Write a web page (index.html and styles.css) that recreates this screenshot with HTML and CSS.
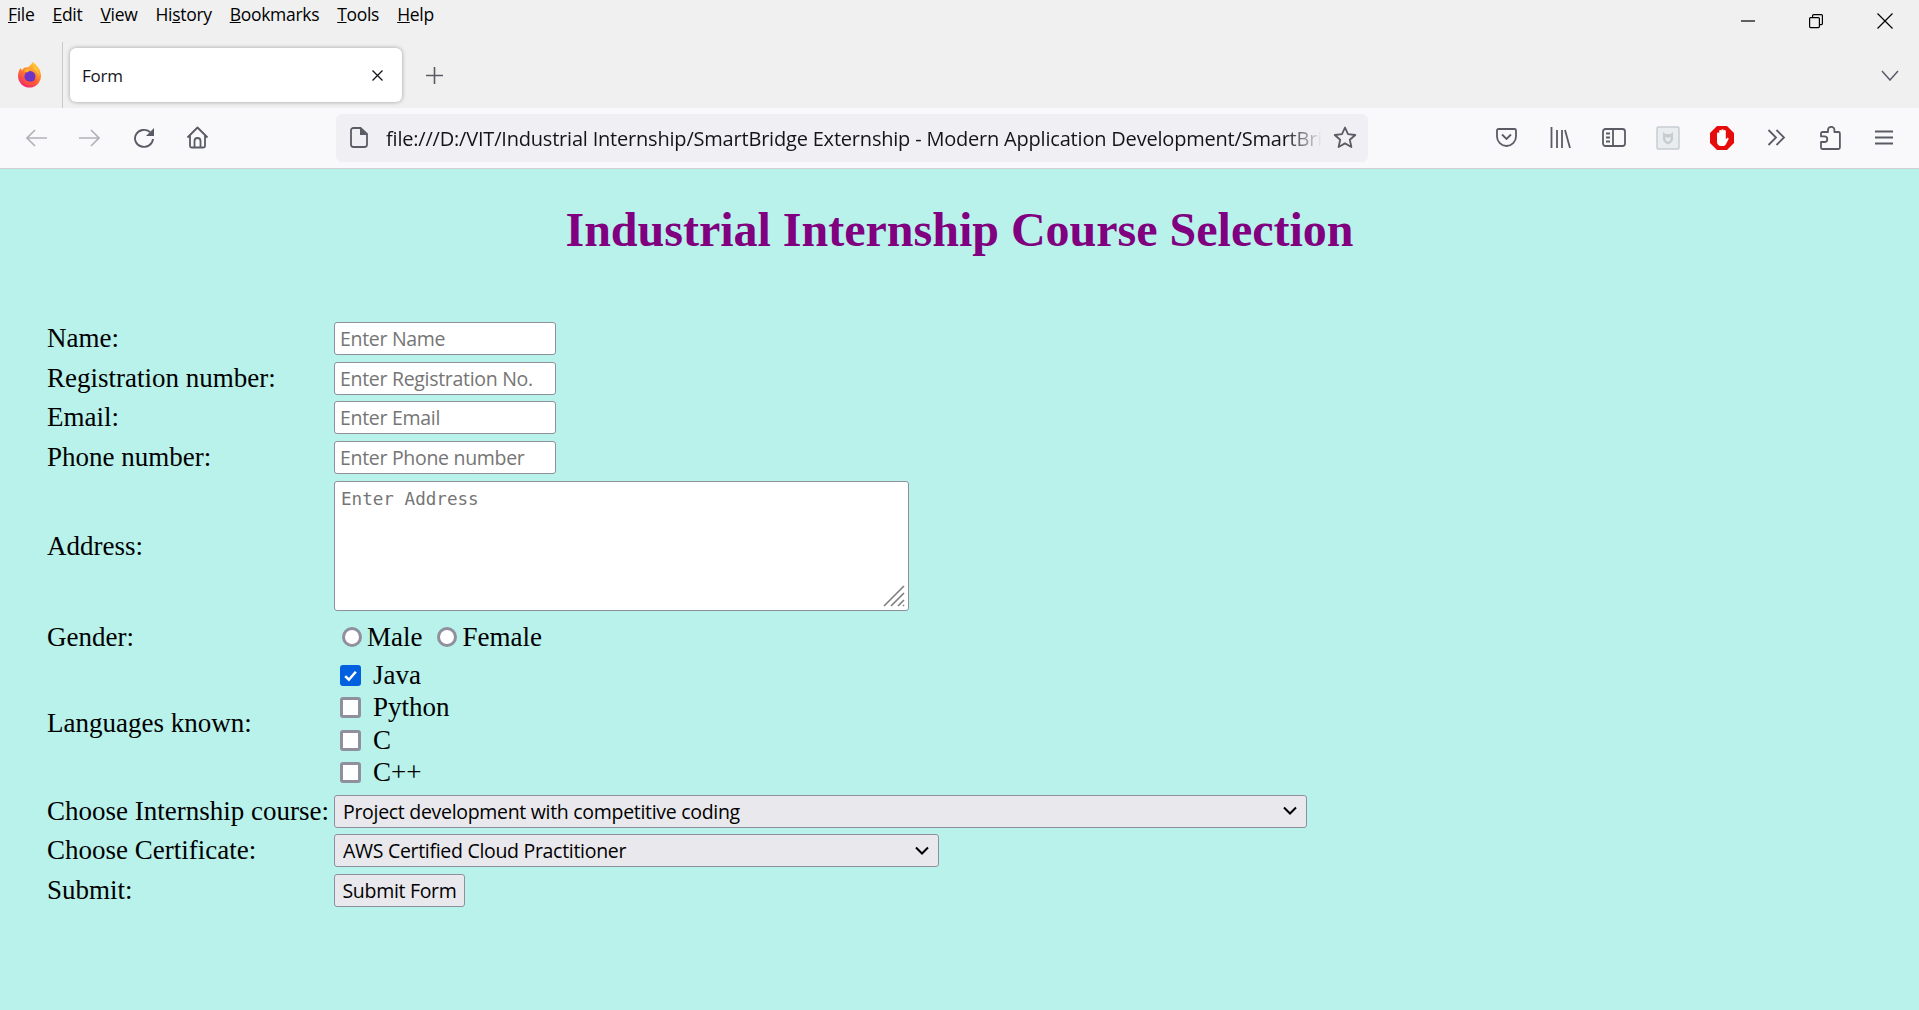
FILE: index.html
```html
<!DOCTYPE html>
<html lang="en">
<head>
	<meta charset="UTF-8">
	<title>Form</title>
	<link rel="stylesheet" href="styles.css">
</head>
<body>
	<header class="browser">
		<div class="menubar">
			<ul class="menu">
				<li><u>F</u>ile</li>
				<li><u>E</u>dit</li>
				<li><u>V</u>iew</li>
				<li>Hi<u>s</u>tory</li>
				<li><u>B</u>ookmarks</li>
				<li><u>T</u>ools</li>
				<li><u>H</u>elp</li>
			</ul>
			<div class="window-btns">
				<span class="window-btn"><svg width="16" height="16" viewBox="0 0 16 16"><path d="M1 8h14" stroke="#000" stroke-width="1.2"/></svg></span>
				<span class="window-btn"><svg width="16" height="16" viewBox="0 0 16 16" fill="none" stroke="#000" stroke-width="1.2"><rect x="1.600" y="4.600" width="9.800" height="10" rx="1"/><path d="M4.600 4.400V2.600a1 1 0 0 1 1-1h7.800a1 1 0 0 1 1 1v8a1 1 0 0 1-1 1h-2"/></svg></span>
				<span class="window-btn"><svg width="16" height="16" viewBox="0 0 16 16"><path d="M.5.500l15 15M15.500.500l-15 15" stroke="#000" stroke-width="1.200"/></svg></span>
			</div>
		</div>
		<div class="tabbar">
			<span class="fx-logo">
				<svg width="26" height="28" viewBox="0 0 26 28">
					<defs>
						<linearGradient id="fx" x1="0.8" y1="0" x2="0.3" y2="1">
							<stop offset="0" stop-color="#ffd93a"/>
							<stop offset="0.5" stop-color="#ff7b2b"/>
							<stop offset="1" stop-color="#f2236f"/>
						</linearGradient>
					</defs>
					<path d="M15.500 1c5 3.500 8.500 8 8.500 14a11.500 11.500 0 0 1-23 0c0-3 1-6 2.500-8 .4 1.200 1 2 1.800 2.400C6 7 8.500 6 11 6.500c1.400-1.800 3.500-3 4.500-5.500z" fill="url(#fx)"/>
					<path d="M17 5c3 2 5 6 5 10-1-3-3-6-5.500-7z" fill="#ffc83a"/>
					<circle cx="13" cy="15.500" r="5.500" fill="#6d34c9"/>
					<path d="M7 10c2-2.500 6-3 9-1.500-2.500 0-4.500 1-5 2.800-1.500 0-3-.4-4-1.300z" fill="#ffb02e"/>
					<path d="M6 15c1.500 6 9.500 8 14 2.500-1 4.500-4 6.500-7.500 6.500C8.500 24 5.500 20 6 15z" fill="#ff5338"/>
				</svg>
			</span>
			<div class="tab">
				<span class="tab-title">Form</span>
				<svg class="tab-close" width="11" height="11" viewBox="0 0 11 11"><path d="M.5.500l10 10M10.500.500l-10 10" stroke="#15141a" stroke-width="1.300"/></svg>
			</div>
			<svg class="tab-new" width="17" height="17" viewBox="0 0 17 17"><path d="M8.500 0v17M0 8.500h17" stroke="#5b5b66" stroke-width="1.600"/></svg>
			<svg class="tab-list" width="18" height="11" viewBox="0 0 18 11"><path d="M1 1l8 9 8-9" fill="none" stroke="#5b5b66" stroke-width="1.500"/></svg>
		</div>
		<nav class="navbar">
			<div class="tools">
				<span class="tool faded"><svg width="22" height="18" viewBox="0 0 22 18"><path d="M22 9H2M10 1L2 9l8 8" fill="none" stroke="#5b5b66" stroke-width="1.700"/></svg></span>
				<span class="tool faded"><svg width="22" height="18" viewBox="0 0 22 18"><path d="M0 9h20M12 1l8 8-8 8" fill="none" stroke="#5b5b66" stroke-width="1.700"/></svg></span>
				<span class="tool"><svg width="22" height="21" viewBox="0 0 22 21"><path d="M20 12a9 8.500 0 1 1-3-7" fill="none" stroke="#5b5b66" stroke-width="1.900"/><path d="M21 1v8h-8z" fill="#5b5b66"/></svg></span>
				<span class="tool tool-home"><svg width="23" height="23" viewBox="0 0 23 23"><path d="M1.500 11.500L11.500 1.500l10 10M4 9.500V20a1.500 1.500 0 0 0 1.500 1.500h12A1.500 1.500 0 0 0 19 20V9.500M8.500 21.500V15a3 3 0 0 1 6 0v6.500" fill="none" stroke="#5b5b66" stroke-width="1.800" stroke-linejoin="round"/></svg></span>
			</div>
			<div class="urlbar">
				<svg class="url-icon" width="18" height="21" viewBox="0 0 18 21"><path d="M3.500 1h7l6.500 6v10.500a2.500 2.500 0 0 1-2.500 2.500h-11A2.500 2.500 0 0 1 1 17.500v-14A2.500 2.500 0 0 1 3.500 1z" fill="none" stroke="#5b5b66" stroke-width="1.800"/><path d="M10 1l7 7h-7z" fill="#5b5b66"/></svg>
				<span class="url-text">file:///D:/VIT/Industrial Internship/SmartBridge Externship - Modern Application Development/SmartBri</span>
				<svg class="url-star" width="24" height="23" viewBox="0 0 24 23"><path d="M12 1.500l3 6.700 7.300.8-5.500 4.800 1.600 7.200-6.400-3.600-6.400 3.600 1.600-7.200L1.700 9l7.300-.8z" fill="none" stroke="#5b5b66" stroke-width="1.800" stroke-linejoin="round"/></svg>
			</div>
			<div class="tools">
				<span class="tool"><svg width="21" height="19" viewBox="0 0 21 19"><path d="M2.500 1h16A1.500 1.500 0 0 1 20 2.500V8.500a9.500 9.500 0 0 1-19 0V2.500A1.500 1.500 0 0 1 2.500 1z" fill="none" stroke="#5b5b66" stroke-width="1.800"/><path d="M6 6.500l4.500 4.500L15 6.500" fill="none" stroke="#5b5b66" stroke-width="1.800"/></svg></span>
				<span class="tool"><svg width="21" height="21" viewBox="0 0 21 21"><path d="M1.500 0v21M7 3v18M12 3v18M15 3l5 18" fill="none" stroke="#5b5b66" stroke-width="1.800"/></svg></span>
				<span class="tool"><svg width="24" height="19" viewBox="0 0 24 19"><rect x="1" y="1" width="22" height="17" rx="2.500" fill="none" stroke="#5b5b66" stroke-width="1.800"/><path d="M11 1v17" stroke="#5b5b66" stroke-width="1.800"/><path d="M4 5.500h4M4 9.500h4M4 13.500h4" stroke="#5b5b66" stroke-width="1.800"/></svg></span>
				<span class="tool"><svg width="24" height="24" viewBox="0 0 24 24"><rect x="1" y="1" width="22" height="22" rx="1.500" fill="#e9edf0" stroke="#c6cdd1" stroke-width="1.500"/><path d="M7 6l2.500 2h5L17 6v7c0 2.500-2.500 4.500-5 5.500-2.500-1-5-3-5-5.500z" fill="#c6cdd1"/><path d="M9.500 10.500L12 12l2.500-1.500V13c0 1.300-1 2.200-2.500 2.800-1.500-.6-2.500-1.500-2.500-2.800z" fill="#e9edf0"/></svg></span>
				<span class="tool"><svg width="24" height="24" viewBox="0 0 24 24"><path d="M7 0h10l7 7v10l-7 7H7l-7-7V7z" fill="#e60c0c"/><path d="M7 13V7.500a1.100 1.100 0 0 1 2.200 0V5a1.100 1.100 0 0 1 2.200 0v-.700a1.100 1.100 0 0 1 2.200 0V5a1.100 1.100 0 0 1 2.200 0v8.500l1-1.300c.8-1 2.300 0 1.700 1.100l-2.500 4.600c-.7 1.300-1.800 2.100-3.400 2.100H11c-2.500 0-4-1.700-4-4z" fill="#fff"/></svg></span>
				<span class="tool"><svg width="19" height="17" viewBox="0 0 19 17"><path d="M1.500 1l7.500 7.500L1.500 16M9.500 1L17 8.500 9.500 16" fill="none" stroke="#5b5b66" stroke-width="1.800"/></svg></span>
				<span class="tool"><svg width="21" height="24" viewBox="0 0 21 24"><path d="M8 6V4a3.200 3.200 0 0 1 6.400 0v2h4a1.500 1.500 0 0 1 1.500 1.500v14a1.500 1.500 0 0 1-1.500 1.500h-16A1.500 1.500 0 0 1 1 21.500V16h3.500a2.800 2.800 0 0 0 0-5.600H1V7.500A1.500 1.500 0 0 1 2.500 6z" fill="none" stroke="#5b5b66" stroke-width="1.800" stroke-linejoin="round"/></svg></span>
				<span class="tool"><svg width="18" height="15" viewBox="0 0 18 15"><path d="M0 1.500h18M0 7.500h18M0 13.500h18" stroke="#5b5b66" stroke-width="2"/></svg></span>
			</div>
		</nav>
	</header>

	<main class="page">
		<h1 class="heading">Industrial Internship Course Selection</h1>
		<form class="course-form">
			<div class="row">
				<label class="label">Name:</label>
				<input class="field" type="text" placeholder="Enter Name">
			</div>
			<div class="row">
				<label class="label">Registration number:</label>
				<input class="field" type="text" placeholder="Enter Registration No.">
			</div>
			<div class="row">
				<label class="label">Email:</label>
				<input class="field" type="text" placeholder="Enter Email">
			</div>
			<div class="row">
				<label class="label">Phone number:</label>
				<input class="field" type="text" placeholder="Enter Phone number">
			</div>
			<div class="row row-address">
				<label class="label">Address:</label>
				<textarea class="area" placeholder="Enter Address"></textarea>
			</div>
			<div class="row row-gender">
				<label class="label">Gender:</label>
				<div class="radios">
					<input class="radio" type="radio" name="gender"><span class="radio-text">Male</span>
					<input class="radio radio-second" type="radio" name="gender"><span class="radio-text">Female</span>
				</div>
			</div>
			<div class="row row-langs">
				<label class="label">Languages known:</label>
				<div class="checks">
					<div class="check-row"><input class="check" type="checkbox" checked><span>Java</span></div>
					<div class="check-row"><input class="check" type="checkbox"><span>Python</span></div>
					<div class="check-row"><input class="check" type="checkbox"><span>C</span></div>
					<div class="check-row"><input class="check" type="checkbox"><span>C++</span></div>
				</div>
			</div>
			<div class="row">
				<label class="label">Choose Internship course:</label>
				<select class="pick pick-course"><option>Project development with competitive coding</option></select>
			</div>
			<div class="row">
				<label class="label">Choose Certificate:</label>
				<select class="pick pick-cert"><option>AWS Certified Cloud Practitioner</option></select>
			</div>
			<div class="row">
				<label class="label">Submit:</label>
				<button class="submit" type="button">Submit Form</button>
			</div>
		</form>
	</main>
</body>
</html>
```

FILE: styles.css
```css
* {
	margin: 0;
	padding: 0;
	box-sizing: border-box;
}
html, body {
	height: 100%;
}
body {
	display: flex;
	flex-direction: column;
	overflow: hidden;
	background: #b8f2eb;
	font-family: "Liberation Serif", serif;
}
li {
	list-style: none;
}

/* browser chrome */
.browser {
	background: #f0f0f0;
	font-family: "Open Sans", "Noto Sans", sans-serif;
	color: #15141a;
}
.menubar {
	height: 42px;
	display: flex;
	justify-content: space-between;
}
.menu {
	display: flex;
	gap: 18px;
	padding: 3px 0 0 8px;
	font-size: 17.500px;
	letter-spacing: -0.3px;
	line-height: 22px;
	color: #000;
}
.window-btns {
	display: flex;
}
.window-btn {
	width: 68.500px;
	height: 42px;
	display: flex;
	align-items: center;
	justify-content: center;
}
.tabbar {
	height: 66px;
	display: flex;
	align-items: center;
}
.fx-logo {
	width: 63px;
	height: 66px;
	padding-right: 3px;
	display: flex;
	align-items: center;
	justify-content: center;
	border-right: 1px solid #c9c9c9;
}
.tab {
	width: 332px;
	height: 54px;
	margin-left: 7px;
	padding: 0 19px 0 12px;
	display: flex;
	align-items: center;
	justify-content: space-between;
	background: #fff;
	border-radius: 6px;
	box-shadow: 0 0 4px rgba(0, 0, 0, 0.35);
}
.tab-title {
	font-size: 17px;
	letter-spacing: -0.2px;
}
.tab-new {
	margin-left: 24px;
}
.tab-list {
	margin-left: auto;
	margin-right: 20px;
}
.navbar {
	height: 61px;
	padding: 0 8px 1px 9px;
	display: flex;
	align-items: center;
	background: #f9f9fb;
	border-bottom: 1px solid #cfcfd4;
}
.tools {
	display: flex;
}
.tool {
	width: 54px;
	height: 48px;
	display: flex;
	align-items: center;
	justify-content: center;
}
.tool-home {
	padding-right: 2px;
}
.faded {
	opacity: 0.45;
}
.urlbar {
	flex: 1;
	min-width: 0;
	height: 48px;
	margin: 0 111px;
	padding: 0 11px 0 14px;
	display: flex;
	align-items: center;
	justify-content: space-between;
	background: #f0f0f4;
	border-radius: 6px;
}
.url-icon {
	flex: none;
	margin-right: 18px;
}
.url-text {
	white-space: nowrap;
	font-size: 20px;
	letter-spacing: -0.2px;
	padding-top: 1px;
	-webkit-mask-image: linear-gradient(to right, #000 96%, transparent);
	mask-image: linear-gradient(to right, #000 96%, transparent);
}
.url-star {
	flex: none;
	margin-left: auto;
}

/* form page */
.page {
	flex: 1;
	padding: 33px 47px 0;
}
.heading {
	font-size: 48px;
	line-height: 56px;
	text-align: center;
	color: #800080;
	margin-bottom: 60.700px;
}
.row {
	display: grid;
	grid-template-columns: 287px 1fr;
	align-items: center;
	padding: 3.300px 0;
	font-size: 27px;
	color: #000;
}
.label {
	line-height: 32px;
	padding-bottom: 1px;
	white-space: nowrap;
}
.field, .area, .pick, .submit {
	font-family: "Open Sans", "Noto Sans", sans-serif;
	border: 1.500px solid #8f8f9d;
	border-radius: 3px;
	outline: none;
}
.field {
	width: 222px;
	height: 33px;
	padding: 0 5px;
	background: #fff;
	font-size: 19.500px;
	letter-spacing: -0.3px;
}
.field::placeholder, .area::placeholder {
	color: #757575;
	opacity: 1;
}
.row-address {
	padding-top: 4px;
}
.area {
	display: block;
	width: 575px;
	height: 130px;
	padding: 7px 6px;
	resize: none;
	font-family: "DejaVu Sans Mono", "Liberation Mono", monospace;
	font-size: 17.600px;
	background: #fff url("data:image/svg+xml,%3Csvg xmlns='http://www.w3.org/2000/svg' width='22' height='22'%3E%3Cpath d='M1 21L21 1M8 21L21 8M15 21l6-6M20 21l1-1' stroke='%23808080' stroke-width='1.700'/%3E%3C/svg%3E") no-repeat right 3px bottom 3px;
}
.row-gender {
	padding: 5px 0 2px;
}
.radios {
	height: 36px;
	display: flex;
	align-items: center;
	padding-left: 8px;
}
.radio {
	appearance: none;
	width: 20px;
	height: 20px;
	border: 3px solid #8f8f9d;
	border-radius: 50%;
	background: #fff;
}
.radio-text {
	margin-left: 5px;
}
.radio-second {
	margin-left: 15px;
}
.row-langs {
	padding: 2px 0 3px;
}
.check-row {
	height: 32.300px;
	display: flex;
	align-items: center;
	gap: 12px;
	padding-left: 6px;
}
.check {
	appearance: none;
	width: 21px;
	height: 21px;
	border: 3px solid #8f8f9d;
	border-radius: 3px;
	background: #fff;
}
.check:checked {
	border-color: #0060df;
	background: #0060df url("data:image/svg+xml,%3Csvg xmlns='http://www.w3.org/2000/svg' viewBox='0 0 16 16'%3E%3Cpath d='M3 8.500l3.500 3.500L13 4.500' fill='none' stroke='%23fff' stroke-width='2.400'/%3E%3C/svg%3E") no-repeat center / 17px;
}
.pick {
	appearance: none;
	height: 33px;
	padding: 0 8px;
	font-size: 19.500px;
	letter-spacing: -0.3px;
	color: #000;
	background: #e9e9ed url("data:image/svg+xml,%3Csvg xmlns='http://www.w3.org/2000/svg' width='14' height='10'%3E%3Cpath d='M1 1.500l6 6 6-6' fill='none' stroke='%23000' stroke-width='2'/%3E%3C/svg%3E") no-repeat right 9px center;
}
.pick-course {
	width: 973px;
}
.pick-cert {
	width: 605px;
}
.submit {
	width: 131px;
	height: 33px;
	font-size: 19.500px;
	letter-spacing: -0.3px;
	color: #000;
	background: #e9e9ed;
}
```
